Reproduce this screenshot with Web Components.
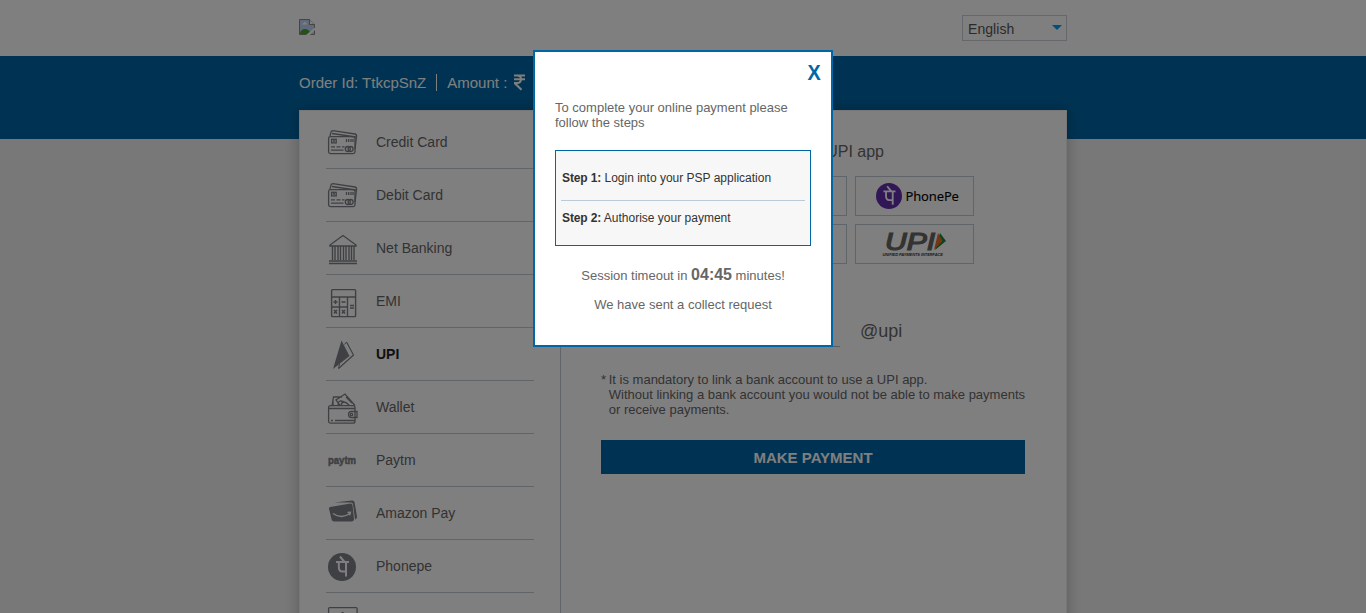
<!DOCTYPE html>
<html lang="en"><head><meta charset="utf-8"><title>Payment</title>
<style>html,body{margin:0;height:100%;overflow:hidden;background:#f1f1f1}</style></head>
<body><checkout-page></checkout-page>
<script>
const define=(name,html)=>customElements.define(name,class extends HTMLElement{
  constructor(){super();this.attachShadow({mode:'open'}).innerHTML=html;}
});

const PE='<path d="M9 10h13M11.800 10v5q0 4.500 3.600 4.500h3.600M19 10v14.500M13 4.500l4.500 5.500" fill="none" stroke-width="2"/>';
const ICONS={
 card:'<g fill="none" stroke-width="1.3"><path d="M4 9 5.300 4.200 7 3.600 29 7Q31 7.500 30.500 9.600L29 22M6 6.500 29.700 10"/><rect x="2.600" y="9.600" width="26.400" height="17" rx="1.800"/><rect x="5.600" y="12.300" width="4.600" height="3.600"/><path d="M7 14h2M20.500 12v3M22.700 12v3M25 12v3M27 12v3M5 19.800h4M10.500 19.800h4M16 19.800h2.500M5 23.200h12.500"/><circle cx="21.800" cy="22" r="2.500"/><circle cx="24.600" cy="22" r="2.500"/></g>',
 bank:'<g fill="none"><path d="M17 2.500 4 12V13h26v-1Z" stroke-width="1.400"/><path d="M6.500 13v14M9 13v14M12 13v14M14.500 13v14M17.500 13v14M20 13v14M23 13v14M25.500 13v14M28 13v14" stroke-width="1.400"/><path d="M3 28h28M3 30.500h28" stroke-width="1.300"/></g>',
 calc:'<g fill="none" stroke-width="1.400"><rect x="5.600" y="3.600" width="24" height="27" rx=".800"/><path d="M6 11h23.500M13.500 11v19.500M21.500 11v19.500M6 21h15.500M7.500 16h4M9.500 14v4M15.500 16h4M24 19.500h4M24 22h4M8 24l3 3.500M11 24l-3 3.500M16 24l3 3.500M19 24l-3 3.500"/></g>',
 upi:'<path d="M15.500 1.500 7 30 23.500 17Z" stroke="none"/><path d="M20.500 3 27.500 16 12.500 29.500" fill="none" stroke-width="1.200"/><path d="M18.500 5.500 20.500 3M13.500 25 12.500 29.500" stroke-width="1"/>',
 wallet:'<g fill="none" stroke-width="1.300"><rect x="2.600" y="13.600" width="26.400" height="17.600" rx="2"/><path d="M3 16.500h26M6 13.500 7.500 5 16 5M14 13.500 10 8 19 2 29 13.500M7 13V7M12 13Q12 7 18 10M15 13q2-6 8 0M20 5l6 6M5 28.500h2M9 28.500h20"/><path d="M29 19.500h-3.500a3 3 0 0 0 0 6H31v-6Z"/><circle cx="25.500" cy="22.500" r="1.200"/></g>',
 paytm:'<text x="2" y="19" font-family="Liberation Sans" font-weight="700" font-size="10.500" textLength="28" lengthAdjust="spacingAndGlyphs" stroke-width=".500">paytm</text>',
 amazon:'<g transform="translate(0 1.500)"><path d="M8 3 26 1q2-.200 2.500 1.500L31 17q.300 2-2 3L27 4.500Q26.700 3 25 3Z" stroke="none"/><path d="M4 7.500 24.500 4q1.700-.200 2 1.500L28 19.500q.200 2.300-2 2.500H8q-2 0-2.400-2L3 9.300Q2.700 7.700 4 7.500Z" stroke="none"/><path d="M7 14q8 6 17 0M21.500 13l3-.200-.800 3" fill="none" stroke="#fff" stroke-width="1.300"/></g>',
 phonepe:'<circle cx="16" cy="16" r="14" stroke="none"/><g transform="translate(1 1)" stroke="#fff">'+PE+'</g>',
 more:'<g fill="none" stroke-width="1.300"><rect x="2.600" y="3.600" width="28.500" height="22" rx="1"/><path d="M17 8v8M14 11l3-3"/></g>'
};

define('shop-logo',`<style>:host{display:block;width:16px;height:16px}svg{display:block}</style>
<svg width="16" height="16" viewBox="0 0 16 16"><path d="M.5.500h10l5 5v10H.5Z" fill="#c1d4f5" stroke="#888"/><path d="M10.500.500v5h5" fill="#fff" stroke="#888"/><path d="M3 5.500q0-1.500 1.500-1.500Q5 2.700 6.300 3T8 5.500Z" fill="#fff"/><path d="M1 15Q1 11 5 10q5-.500 7 5Z" fill="#49a52b"/><path d="M7 16 16 8.500V11l-5 5Z" fill="#fff"/></svg>`);

define('language-select',`<style>:host{box-sizing:border-box;width:105px;height:26px;display:flex;align-items:center;justify-content:space-between;border:1px solid #cbcfd6;padding:2px 4px 0 5px;font-size:14px;color:#555;letter-spacing:.050px}svg{margin-top:-3px}</style>
<slot></slot><svg width="10" height="5"><path d="M0 0h10L5 5Z" fill="#00a0ff"/></svg>`);

define('order-bar',`<style>:host{display:flex;align-items:flex-start;height:83px;background:#0066a6;color:#fff;font-size:15px;padding:18px 0 0 299px;box-sizing:border-box}span{line-height:17px;white-space:nowrap}.id{padding-right:10px;border-right:1px solid #fff;margin-right:10px}svg{margin-left:7px}</style>
<span class="id"><slot name="id"></slot></span><span><slot name="label"></slot></span>
<svg width="11" height="17" viewBox="0 0 11 17"><path d="M0 1.400h11M0 5.300h11M.500 1.400h2.500q4 0 4 3.800T3 9H.500l7 6.800" fill="none" stroke="#fff" stroke-width="2"/></svg>`);

customElements.define('pay-method',class extends HTMLElement{
 connectedCallback(){this.attachShadow({mode:'open'}).innerHTML=`<style>:host{box-sizing:border-box;height:53px;display:flex;align-items:center;border-bottom:1px solid #c3cad0;font-size:14px;color:#666}:host([active]){font-weight:700;color:#222}svg{display:block;width:34px;height:34px;margin:4px 16px 0 0;fill:#7c8186;stroke:#7c8186;flex:none}</style><svg viewBox="0 0 34 34">${ICONS[this.getAttribute('icon')]}</svg><slot></slot>`;}
});

define('upi-app',`<style>:host{box-sizing:border-box;width:119px;height:40px;border:1px solid #bfcbd0;display:flex;align-items:center;justify-content:center}</style><slot></slot>`);

define('phonepe-brand',`<style>:host{display:flex;align-items:center;gap:4px;font:400 13px "Noto Sans",sans-serif;color:#000;margin-left:3px}span{width:51px;letter-spacing:-.150px;-webkit-text-stroke:.100px}</style>
<svg width="26" height="26" viewBox="1 1 28 28"><circle cx="15" cy="15" r="14" fill="#642fae"/><g stroke="#fff">${PE}</g></svg><span>PhonePe</span>`);

define('upi-brand',`<style>:host{display:block;width:66px}svg{display:block;overflow:visible}.full{font:italic 700 4px/5px "Liberation Sans",sans-serif;color:#333;white-space:nowrap;margin-left:1px;letter-spacing:-.080px}</style>
<svg width="66" height="20" viewBox="0 0 66 20"><text x="3" y="18" font-family="Liberation Sans" font-style="italic" font-size="23" fill="#666" stroke="#666" stroke-width="1.200" textLength="50" lengthAdjust="spacingAndGlyphs">UPI</text><path d="M58 1 64 9 53 18Z" fill="#138843"/><path d="M56 1 60.500 9 52 18Z" fill="#e96d20"/></svg><div class="full">UNIFIED PAYMENTS INTERFACE</div>`);

define('upi-panel',`<style>:host{box-sizing:border-box;display:block;width:506px;border-left:1px solid #c3cad0;padding:31px 41px 0 40px;color:#666}
h2{margin:0;height:19px;width:283px;text-align:right;font-weight:400;font-size:16px;line-height:19px}
.apps{display:grid;grid-template-columns:repeat(3,119px);gap:8px;margin-top:15px}
.vpa{display:flex;height:31px;margin-top:52px;align-items:stretch}.field{width:239px;border-bottom:1px solid #bbb}.vpa span{font-size:18px;line-height:31px;margin:0 0 0 20px}
.note{display:flex;margin-top:25px;font-size:13px;line-height:15px;white-space:nowrap}.note i{font-style:normal;width:8px}
button{display:block;width:424px;height:34px;margin:23px 0 0;padding:1px 0 0;border:0;background:#0066a6;color:#fff;font:700 15px "Liberation Sans",Arial,sans-serif}</style>
<h2>UPI app</h2><div class="apps"><upi-app></upi-app><upi-app></upi-app><upi-app><phonepe-brand></phonepe-brand></upi-app><upi-app></upi-app><upi-app></upi-app><upi-app><upi-brand></upi-brand></upi-app></div>
<div class="vpa"><div class="field"></div><span>@upi</span></div>
<div class="note"><i>*</i><div>It is mandatory to link a bank account to use a UPI app.<br>Without linking a bank account you would not be able to make payments<br>or receive payments.</div></div><button>MAKE PAYMENT</button>`);

define('collect-dialog',`<style>:host{position:absolute;left:533px;top:50px;width:300px;height:297px;box-sizing:border-box;border:2px solid #0066a6;background:#fff;padding:9px 20px 0;color:#666;font-size:13px;line-height:15px}
.x{display:flex;justify-content:flex-end;margin-right:-10px;height:23px;font-weight:700;font-size:22px;line-height:23px;color:#0066a6}.x span{transform:scaleX(.900);transform-origin:right}
p{margin:16px 0 20px;white-space:nowrap}.steps{box-sizing:border-box;height:96px;border:1px solid #0066a6;background:#f7f7f7;color:#333;font-size:12px;padding:15px 5px 0}.steps div{height:34px;line-height:24px;padding-left:1px;box-sizing:border-box}.steps div:first-child{height:35px;border-bottom:1px solid #bacbd5}.steps div+div{padding-top:5px}.steps b{letter-spacing:-.120px}
.time,.sent{text-align:center;white-space:nowrap}.time{margin-top:20px;line-height:18px}.time b{font-size:16px}.sent{margin:12px 0 0}</style>
<div class="x"><span>X</span></div><p>To complete your online payment please<br>follow the steps</p>
<div class="steps"><div><b>Step 1:</b> Login into your PSP application</div><div><b>Step 2:</b> Authorise your payment</div></div>
<div class="time">Session timeout in <b>04:45</b> minutes!</div><div class="sent">We have sent a collect request</div>`);

define('checkout-page',`<style>:host{display:block;position:relative;width:1366px;height:613px;overflow:hidden;font-family:"Liberation Sans",Arial,sans-serif;background:#f1f1f1}
header{height:56px;box-sizing:border-box;background:#fff;display:flex;justify-content:space-between;padding:15px 299px 0}shop-logo{margin-top:4px}
main{position:relative;display:flex;width:768px;height:520px;margin:-29px auto 0;box-sizing:border-box;background:#fff;box-shadow:0 0 14px rgba(0,0,0,.250);border:1px solid #eee}
nav{width:208px;margin:5px 26px 0;flex:none}
.shade{position:absolute;inset:0;background:rgba(0,0,0,.5)}</style>
<header><shop-logo></shop-logo><language-select>English</language-select></header>
<order-bar><span slot="id">Order Id: TtkcpSnZ</span><span slot="label">Amount :</span></order-bar>
<main><nav><pay-method icon="card">Credit Card</pay-method><pay-method icon="card">Debit Card</pay-method><pay-method icon="bank">Net Banking</pay-method><pay-method icon="calc">EMI</pay-method><pay-method icon="upi" active>UPI</pay-method><pay-method icon="wallet">Wallet</pay-method><pay-method icon="paytm">Paytm</pay-method><pay-method icon="amazon">Amazon Pay</pay-method><pay-method icon="phonepe">Phonepe</pay-method><pay-method icon="more"></pay-method></nav><upi-panel></upi-panel></main>
<div class="shade"></div><collect-dialog></collect-dialog>`);
</script></body></html>
